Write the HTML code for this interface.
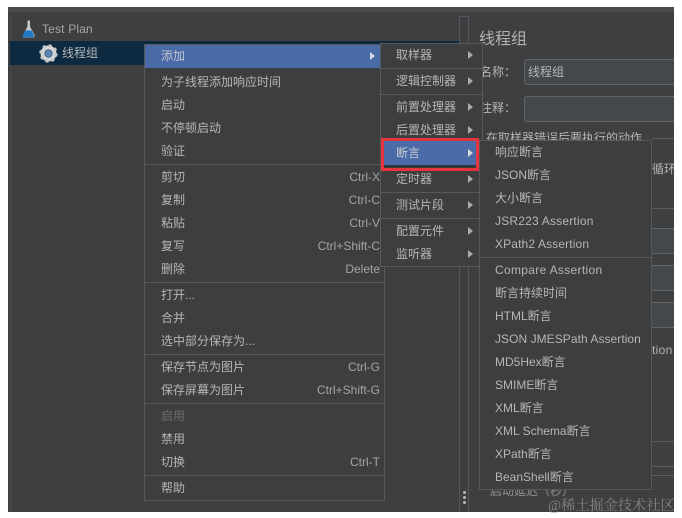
<!DOCTYPE html>
<html><head><meta charset="utf-8"><style>
html,body{margin:0;padding:0;background:#fff}
#r{position:relative;width:682px;height:518px;overflow:hidden;background:#fff;font-family:"Liberation Sans","Noto Sans CJK SC",sans-serif;font-size:12px;color:#b4b6b7}
#r div{position:absolute;box-sizing:border-box}
.t{white-space:nowrap;line-height:16px;height:16px}
.k{white-space:nowrap;line-height:16px;height:16px;text-align:right;color:#a3a5a6}
.l{background:#57595b;height:1px}
.a{width:0;height:0;border-left:5px solid #a9abac;border-top:4.5px solid transparent;border-bottom:4.5px solid transparent}
.m{background:#3d3e40;border:1px solid #56585a}
.f{background:#45484a;border:1px solid #626466;border-radius:3px}
.h{height:1px;background:#5a5c5e}
</style></head><body><div id="r">
<div style="left:8px;top:7px;width:666px;height:505px;background:#3e3f41"></div>
<div style="left:8px;top:7px;width:666px;height:5px;background:#4a4b4c"></div>
<div style="left:10px;top:12px;width:1px;height:500px;background:#484a4b"></div>
<div style="left:10px;top:41px;width:449px;height:24px;background:#0d2a40"></div>
<div style="left:459px;top:16px;width:1px;height:496px;background:#55575a"></div>
<div style="left:468px;top:16px;width:1px;height:496px;background:#55575a"></div>
<div style="left:459px;top:16px;width:10px;height:1px;background:#55575a"></div>

<svg style="position:absolute;left:21px;top:19px" width="16" height="20" viewBox="0 0 16 20"><path d="M6.5 1.5h2.5v6l4.5 8.500q.8 2.500-1.800 2.500h-7.900q-2.600 0-1.800-2.500l4.500-8.500z" fill="#c6c8ca"/><path d="M4.500 11.500h6l2.500 5q.5 1.800-1.500 1.800h-8.500q-2 0-1.500-1.800z" fill="#1f78c8"/></svg>
<div class="t" style="left:42px;top:21px;letter-spacing:.17px;color:#a5a7a8">Test Plan</div>
<svg style="position:absolute;left:39px;top:44px" width="19" height="19" viewBox="0 0 19 19"><circle cx="9.500" cy="9.500" r="6" fill="none" stroke="#d3d5d7" stroke-width="4"/><circle cx="9.500" cy="9.500" r="8" fill="none" stroke="#c3c5c7" stroke-width="2.500" stroke-dasharray="3 3.280"/><circle cx="9.500" cy="9.500" r="3.500" fill="#5b86b5"/></svg>
<div class="t" style="left:62px;top:45px;color:#b4b6b7">线程组</div>

<div class="t" style="left:479px;top:28px;height:20px;line-height:20px;font-size:16px;color:#b0b2b3;margin-top:2px">线程组</div>
<div class="t" style="left:480px;top:64px;font-size:12px">名称：</div>
<div class="f" style="left:524px;top:59px;width:160px;height:26px"></div>
<div class="t" style="left:528px;top:64px">线程组</div>
<div class="t" style="left:480px;top:100px">注释：</div>
<div class="f" style="left:524px;top:96px;width:160px;height:26px"></div>
<div class="t" style="left:486px;top:130px">在取样器错误后要执行的动作</div>
<div class="h" style="left:652px;top:138px;width:22px"></div>
<div class="t" style="left:652px;top:161px;width:22px;overflow:hidden">循环</div>
<div class="h" style="left:652px;top:208px;width:22px"></div>
<div style="left:652px;top:228px;width:22px;height:26px;background:#45484a;border-top:1px solid #626466;border-bottom:1px solid #626466"></div>
<div style="left:652px;top:265px;width:22px;height:26px;background:#45484a;border-top:1px solid #626466;border-bottom:1px solid #626466"></div>
<div style="left:652px;top:302px;width:22px;height:26px;background:#45484a;border-top:1px solid #626466;border-bottom:1px solid #626466"></div>
<div class="t" style="left:652px;top:342px;letter-spacing:.3px">tion</div>
<div class="h" style="left:652px;top:441px;width:22px"></div>
<div class="h" style="left:652px;top:466px;width:22px"></div>
<div class="h" style="left:652px;top:475px;width:22px"></div>
<div class="t" style="left:490px;top:483px;color:#8f9192">启动延迟（秒）</div>
<div style="left:463px;top:491px;width:3px;height:3px;background:#b6b8b9;border-radius:2px"></div>
<div style="left:463px;top:496px;width:3px;height:3px;background:#b6b8b9;border-radius:2px"></div>
<div style="left:463px;top:501px;width:3px;height:3px;background:#b6b8b9;border-radius:2px"></div>
<div style="left:674px;top:0;width:8px;height:518px;background:#fff"></div>

<!-- main menu -->
<div class="m" style="left:144px;top:44px;width:241px;height:457px"></div>
<div style="left:145px;top:45px;width:235px;height:23px;background:#4a6aa8"></div>
<div class="a" style="left:370px;top:52px;border-left-color:#d5d7d9"></div>
<div class="t" style="left:161px;top:48px;color:#c3c6ca">添加</div>
<div class="t" style="left:161px;top:74px">为子线程添加响应时间</div>
<div class="t" style="left:161px;top:97px">启动</div>
<div class="t" style="left:161px;top:120px">不停顿启动</div>
<div class="t" style="left:161px;top:143px">验证</div>
<div class="l" style="left:145px;top:164px;width:239px"></div>
<div class="t" style="left:161px;top:169px">剪切</div><div class="k" style="left:260px;top:169px;width:120px">Ctrl-X</div>
<div class="t" style="left:161px;top:192px">复制</div><div class="k" style="left:260px;top:192px;width:120px">Ctrl-C</div>
<div class="t" style="left:161px;top:215px">粘贴</div><div class="k" style="left:260px;top:215px;width:120px">Ctrl-V</div>
<div class="t" style="left:161px;top:238px">复写</div><div class="k" style="left:260px;top:238px;width:120px">Ctrl+Shift-C</div>
<div class="t" style="left:161px;top:261px">删除</div><div class="k" style="left:260px;top:261px;width:120px">Delete</div>
<div class="l" style="left:145px;top:282px;width:239px"></div>
<div class="t" style="left:161px;top:287px">打开...</div>
<div class="t" style="left:161px;top:310px">合并</div>
<div class="t" style="left:161px;top:333px">选中部分保存为...</div>
<div class="l" style="left:145px;top:354px;width:239px"></div>
<div class="t" style="left:161px;top:359px">保存节点为图片</div><div class="k" style="left:260px;top:359px;width:120px">Ctrl-G</div>
<div class="t" style="left:161px;top:382px">保存屏幕为图片</div><div class="k" style="left:260px;top:382px;width:120px">Ctrl+Shift-G</div>
<div class="l" style="left:145px;top:403px;width:239px"></div>
<div class="t" style="left:161px;top:408px;color:#6b6d6e">启用</div>
<div class="t" style="left:161px;top:431px">禁用</div>
<div class="t" style="left:161px;top:454px">切换</div><div class="k" style="left:260px;top:454px;width:120px">Ctrl-T</div>
<div class="l" style="left:145px;top:475px;width:239px"></div>
<div class="t" style="left:161px;top:480px">帮助</div>

<!-- submenu 1 -->
<div class="m" style="left:380px;top:43px;width:103px;height:224px"></div>
<div class="t" style="left:396px;top:47px">取样器</div><div class="a" style="left:468px;top:51px"></div>
<div class="l" style="left:381px;top:68px;width:101px"></div>
<div class="t" style="left:396px;top:73px">逻辑控制器</div><div class="a" style="left:468px;top:77px"></div>
<div class="l" style="left:381px;top:94px;width:101px"></div>
<div class="t" style="left:396px;top:99px">前置处理器</div><div class="a" style="left:468px;top:103px"></div>
<div class="t" style="left:396px;top:122px">后置处理器</div><div class="a" style="left:468px;top:126px"></div>
<div class="t" style="left:396px;top:171px">定时器</div><div class="a" style="left:468px;top:175px"></div>
<div class="l" style="left:381px;top:192px;width:101px"></div>
<div class="t" style="left:396px;top:197px">测试片段</div><div class="a" style="left:468px;top:201px"></div>
<div class="l" style="left:381px;top:218px;width:101px"></div>
<div class="t" style="left:396px;top:223px">配置元件</div><div class="a" style="left:468px;top:227px"></div>
<div class="t" style="left:396px;top:246px">监听器</div><div class="a" style="left:468px;top:250px"></div>

<!-- highlighted -->
<div style="left:381px;top:138px;width:98px;height:33px;border:3px solid #e5343d;background:#4a6aa8"></div>
<div style="left:384px;top:165px;width:92px;height:3px;background:#34373a"></div>
<div class="t" style="left:396px;top:145px;color:#c9ccd0">断言</div><div class="a" style="left:468px;top:149px;border-left-color:#d5d7d9"></div>

<!-- submenu 2 -->
<div class="m" style="left:479px;top:140px;width:173px;height:350px"></div>
<div class="t" style="left:495px;top:144px">响应断言</div>
<div class="t" style="left:495px;top:167px">JSON断言</div>
<div class="t" style="left:495px;top:190px">大小断言</div>
<div class="t" style="left:495px;top:213px;letter-spacing:.2px">JSR223 Assertion</div>
<div class="t" style="left:495px;top:236px;letter-spacing:.13px">XPath2 Assertion</div>
<div class="l" style="left:480px;top:257px;width:171px"></div>
<div class="t" style="left:495px;top:262px;letter-spacing:.32px">Compare Assertion</div>
<div class="t" style="left:495px;top:285px">断言持续时间</div>
<div class="t" style="left:495px;top:308px">HTML断言</div>
<div class="t" style="left:495px;top:331px;letter-spacing:.05px">JSON JMESPath Assertion</div>
<div class="t" style="left:495px;top:354px">MD5Hex断言</div>
<div class="t" style="left:495px;top:377px">SMIME断言</div>
<div class="t" style="left:495px;top:400px">XML断言</div>
<div class="t" style="left:495px;top:423px">XML Schema断言</div>
<div class="t" style="left:495px;top:446px">XPath断言</div>
<div class="t" style="left:495px;top:469px">BeanShell断言</div>

<div class="t" style="left:548px;top:496px;height:20px;line-height:20px;font-size:14.2px;font-family:'Liberation Serif','Noto Serif CJK SC',serif;color:#8f9192;opacity:.85">@稀土掘金技术社区</div>
</div></body></html>
